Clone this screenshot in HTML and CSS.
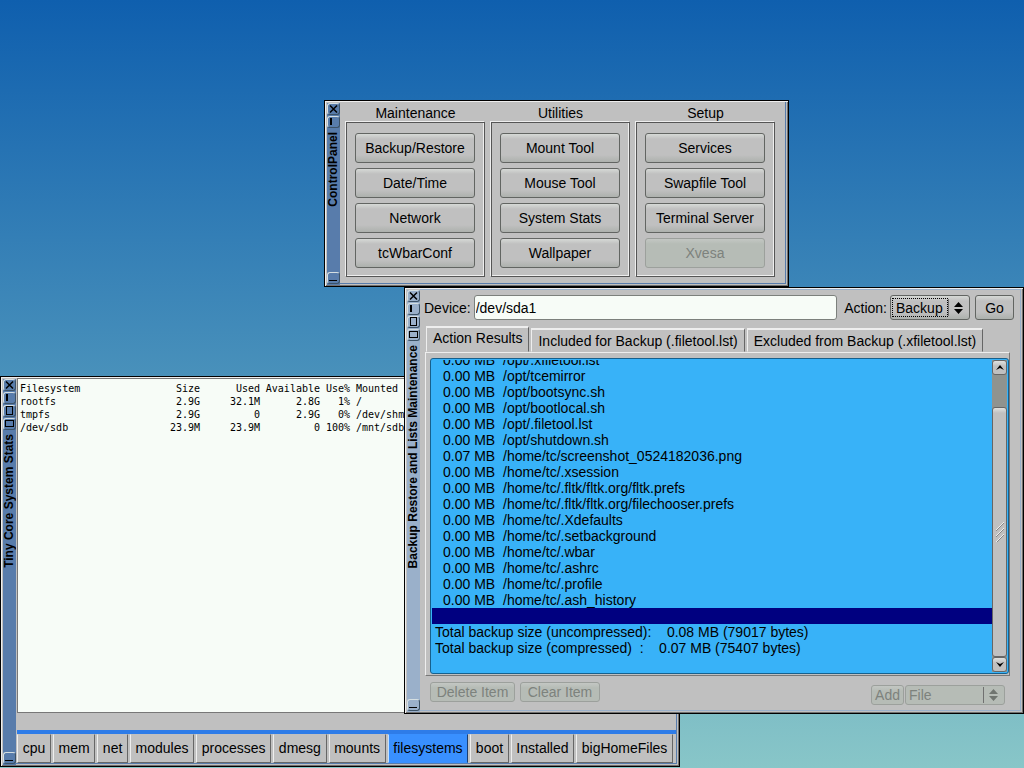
FILE: index.html
```html
<!DOCTYPE html>
<html lang="en">
<head>
<meta charset="utf-8">
<title>Tiny Core Desktop</title>
<link rel="stylesheet" href="styles.css">
</head>
<body>
<main class="desktop">

  <section class="window window-stats" aria-label="Tiny Core System Stats">
    <div class="titlebar">
      <button class="wm-btn" aria-label="Close"><svg viewBox="0 0 11 10"><path class="cross" d="M2 1.500l7 7M9 1.500l-7 7"/></svg></button>
      <button class="wm-btn" aria-label="Shade"><svg viewBox="0 0 11 10"><path d="M3 1v7"/></svg></button>
      <button class="wm-btn" aria-label="Maximize height"><svg viewBox="0 0 11 10"><rect class="thin" x="2.500" y=".5" width="6" height="8"/></svg></button>
      <button class="wm-btn" aria-label="Maximize width"><svg viewBox="0 0 11 10"><rect class="thin" x="1.500" y="1.500" width="8" height="6"/></svg></button>
      <h2 class="title">Tiny Core System Stats</h2>
      <button class="wm-btn wm-last" aria-label="Iconify"><svg viewBox="0 0 11 10"><path class="thin" d="M1 7.500h8"/></svg></button>
    </div>
    <div class="client stats">
      <div class="output">
        <table class="df">
          <tr><th class="c-fs">Filesystem</th><th class="c-num">Size</th><th class="c-num">Used</th><th class="c-num">Available</th><th class="c-use">Use%</th><th class="c-mnt">Mounted on</th></tr>
          <tr><td>rootfs</td><td class="c-num">2.9G</td><td class="c-num">32.1M</td><td class="c-num">2.8G</td><td class="c-use">1%</td><td class="c-mnt">/</td></tr>
          <tr><td>tmpfs</td><td class="c-num">2.9G</td><td class="c-num">0</td><td class="c-num">2.9G</td><td class="c-use">0%</td><td class="c-mnt">/dev/shm</td></tr>
          <tr><td>/dev/sdb</td><td class="c-num">23.9M</td><td class="c-num">23.9M</td><td class="c-num">0</td><td class="c-use">100%</td><td class="c-mnt">/mnt/sdb</td></tr>
        </table>
      </div>
      <div class="stats-strip"></div>
      <nav class="stats-tabs">
        <button>cpu</button><button>mem</button><button>net</button><button>modules</button><button>processes</button><button>dmesg</button><button>mounts</button><button class="active">filesystems</button><button>boot</button><button>Installed</button><button>bigHomeFiles</button>
      </nav>
    </div>
  </section>

  <section class="window window-control" aria-label="ControlPanel">
    <div class="titlebar">
      <button class="wm-btn" aria-label="Close"><svg viewBox="0 0 11 10"><path class="cross" d="M2 1.500l7 7M9 1.500l-7 7"/></svg></button>
      <button class="wm-btn" aria-label="Shade"><svg viewBox="0 0 11 10"><path d="M3 1v7"/></svg></button>
      <h2 class="title">ControlPanel</h2>
      <button class="wm-btn wm-last" aria-label="Iconify"><svg viewBox="0 0 11 10"><path class="thin" d="M1 7.500h8"/></svg></button>
    </div>
    <div class="client control">
      <div class="group">
        <h3>Maintenance</h3>
        <div class="group-box"><button class="btn">Backup/Restore</button><button class="btn">Date/Time</button><button class="btn">Network</button><button class="btn">tcWbarConf</button></div>
      </div>
      <div class="group">
        <h3>Utilities</h3>
        <div class="group-box"><button class="btn">Mount Tool</button><button class="btn">Mouse Tool</button><button class="btn">System Stats</button><button class="btn">Wallpaper</button></div>
      </div>
      <div class="group">
        <h3>Setup</h3>
        <div class="group-box"><button class="btn">Services</button><button class="btn">Swapfile Tool</button><button class="btn">Terminal Server</button><button class="btn" disabled>Xvesa</button></div>
      </div>
    </div>
  </section>

  <section class="window window-backup" aria-label="Backup Restore and Lists Maintenance">
    <div class="titlebar">
      <button class="wm-btn" aria-label="Close"><svg viewBox="0 0 11 10"><path class="cross" d="M2 1.500l7 7M9 1.500l-7 7"/></svg></button>
      <button class="wm-btn" aria-label="Shade"><svg viewBox="0 0 11 10"><path d="M3 1v7"/></svg></button>
      <button class="wm-btn" aria-label="Maximize height"><svg viewBox="0 0 11 10"><rect class="thin" x="2.500" y=".5" width="6" height="8"/></svg></button>
      <button class="wm-btn" aria-label="Maximize width"><svg viewBox="0 0 11 10"><rect class="thin" x="1.500" y="1.500" width="8" height="6"/></svg></button>
      <h2 class="title">Backup Restore and Lists Maintenance</h2>
      <button class="wm-btn wm-last" aria-label="Iconify"><svg viewBox="0 0 11 10"><path class="thin" d="M1 7.500h8"/></svg></button>
    </div>
    <div class="client backup">
      <div class="device-row">
        <label for="device">Device:</label>
        <input id="device" class="field" type="text" value="/dev/sda1">
        <label for="action" class="action-label">Action:</label>
        <span class="choice choice-action">
          <select id="action"><option>Backup</option><option>Restore</option></select>
          <svg class="arrows" viewBox="0 0 9 12"><path d="M0 5L4.500 0L9 5zM0 7h9L4.500 12z"/></svg>
        </span>
        <button class="btn btn-go">Go</button>
      </div>
      <div class="tabs" role="tablist">
        <button class="tab active" role="tab">Action Results</button>
        <button class="tab" role="tab">Included for Backup (.filetool.lst)</button>
        <button class="tab" role="tab">Excluded from Backup (.xfiletool.lst)</button>
      </div>
      <div class="panel">
        <div class="browser">
          <ul class="results">
            <li><span>0.00 MB</span>/opt/.xfiletool.lst</li>
            <li><span>0.00 MB</span>/opt/tcemirror</li>
            <li><span>0.00 MB</span>/opt/bootsync.sh</li>
            <li><span>0.00 MB</span>/opt/bootlocal.sh</li>
            <li><span>0.00 MB</span>/opt/.filetool.lst</li>
            <li><span>0.00 MB</span>/opt/shutdown.sh</li>
            <li><span>0.07 MB</span>/home/tc/screenshot_0524182036.png</li>
            <li><span>0.00 MB</span>/home/tc/.xsession</li>
            <li><span>0.00 MB</span>/home/tc/.fltk/fltk.org/fltk.prefs</li>
            <li><span>0.00 MB</span>/home/tc/.fltk/fltk.org/filechooser.prefs</li>
            <li><span>0.00 MB</span>/home/tc/.Xdefaults</li>
            <li><span>0.00 MB</span>/home/tc/.setbackground</li>
            <li><span>0.00 MB</span>/home/tc/.wbar</li>
            <li><span>0.00 MB</span>/home/tc/.ashrc</li>
            <li><span>0.00 MB</span>/home/tc/.profile</li>
            <li><span>0.00 MB</span>/home/tc/.ash_history</li>
            <li class="selected"></li>
            <li class="total">Total backup size (uncompressed): &nbsp;&nbsp; 0.08 MB (79017 bytes)</li>
            <li class="total">Total backup size (compressed) &nbsp;: &nbsp;&nbsp; 0.07 MB (75407 bytes)</li>
          </ul>
          <div class="scrollbar">
            <button class="sb-btn" aria-label="Scroll up"><svg viewBox="0 0 8 5"><path d="M0 5L4 0L8 5L4 3z"/></svg></button>
            <div class="sb-track">
              <div class="sb-thumb"><svg viewBox="0 0 10 20"><path class="hi" d="M1 8L9 0M1 14L9 6M1 20L9 12"/><path class="lo" d="M1 9L9 1M1 15L9 7M2 20L9 13"/></svg></div>
            </div>
            <button class="sb-btn" aria-label="Scroll down"><svg viewBox="0 0 8 5"><path d="M0 0L4 5L8 0L4 2z"/></svg></button>
          </div>
        </div>
      </div>
      <div class="footer">
        <div class="footer-left">
          <button class="btn btn-delete" disabled>Delete Item</button>
          <button class="btn btn-clear" disabled>Clear Item</button>
        </div>
        <div class="footer-right">
          <button class="btn" disabled>Add</button>
          <span class="choice choice-file disabled">
            <select aria-label="Item type" disabled><option>File</option></select>
            <svg class="arrows" viewBox="0 0 9 12"><path d="M0 5L4.500 0L9 5zM0 7h9L4.500 12z"/></svg>
          </span>
        </div>
      </div>
    </div>
  </section>

</main>
</body>
</html>
```

FILE: styles.css
```css
* { box-sizing: border-box; }

body {
  margin: 0;
  font: 14px/16px "Liberation Sans", Arial, sans-serif;
  color: #000;
}

button, input, select { font: inherit; color: inherit; margin: 0; }
h2, h3, ul { margin: 0; padding: 0; font: inherit; }

.desktop {
  position: relative;
  min-height: 100vh;
  overflow: hidden;
  background: linear-gradient(#0f5fae, #4a92bb 50%, #88c6c8);
}

/* Window frames */
.window {
  position: absolute;
  display: flex;
  padding: 1px;
  background: #c0c0c0;
  border: 1px solid #000;
  box-shadow: inset 1px 1px #eee, inset -1px -1px #707070;
  --bar: #587cab;
}
.window-stats { left: 0; right: 344px; top: 376px; bottom: 1px; }
.window-control { left: 324px; top: 100px; }
.window-backup { left: 404px; right: 0; top: 287px; bottom: 54px; --bar: #9ab0ca; }

.titlebar {
  display: flex;
  flex-direction: column;
  align-items: center;
  flex: none;
  gap: 1px;
  width: 13px;
  margin: 1px 0 0 1px;
  padding-bottom: 1px;
  background: var(--bar);
}
.wm-btn {
  flex: none;
  width: 13px;
  height: 12px;
  padding: 0;
  border: 1px solid;
  border-color: #d5dfe2 #3c5266 #3c5266 #d5dfe2;
  border-radius: 3px;
  background: var(--bar);
}
.wm-btn svg { display: block; width: 11px; height: 10px; fill: none; stroke: #000; stroke-width: 2; }
.wm-btn .thin { stroke-width: 1; }
.wm-btn .cross { stroke-width: 1.5; }
.wm-last { margin-top: auto; }
.title {
  writing-mode: vertical-rl;
  transform: rotate(180deg);
  font: bold 12px/13px "Liberation Sans", Arial, sans-serif;
  white-space: nowrap;
  margin-top: 3px;
}

.client {
  flex: 1;
  min-width: 0;
  border: solid var(--bar);
  border-width: 0 1px 1px 0;
  margin-right: 1px;
  margin-bottom: 1px;
}

/* Buttons */
.btn {
  padding: 0 5px;
  border: 1px solid #626562;
  border-radius: 3px;
  background: linear-gradient(#d6d9d6, #c0c0c0 5px, #c0c0c0 calc(100% - 7px), #adb1ad);
  white-space: nowrap;
}
.btn:disabled {
  color: #7d827d;
  border-color: #9ca09c;
  background: linear-gradient(#c3c7c3, #b6bcb6 5px, #b6bcb6);
}

/* System stats */
.stats { display: flex; flex-direction: column; padding-left: 1px; }
.output {
  flex: 1;
  overflow: hidden;
  padding: 3px 2px;
  background: #f7fcf7;
  border: 1px solid #777;
  border-right-color: #eee;
}
.df {
  table-layout: fixed;
  border-collapse: collapse;
  font: 10px/13px "DejaVu Sans Mono", monospace;
  white-space: pre;
}
.df th, .df td { padding: 0; font-weight: normal; text-align: left; }
.df .c-fs { width: 120px; }
.df .c-num { width: 60px; text-align: right; }
.df .c-use { width: 30px; text-align: right; }
.df .c-mnt { width: 90px; padding-left: 6px; }
.stats-strip {
  height: 21px;
  border-bottom: 4px solid #2e7ce8;
}
.stats-tabs { display: flex; gap: 2px; padding: 0 3px 0 0; }
.stats-tabs button {
  flex: 1 1 auto;
  height: 29px;
  padding: 0 0 2px;
  border: 1px solid;
  border-color: #c0c0c0 #666 #666 #eee;
  background: #c0c0c0;
}
.stats-tabs .active { background: #3990ff; border-color: #3990ff #1c3f70 #3990ff #c0e0ff; }

/* Control panel */
.control { display: flex; gap: 6px; padding: 2px 10px 6px 6px; background: #c0c0c0; }
.group { text-align: center; }
.group h3 { line-height: 18px; }
.group-box {
  display: flex;
  flex-direction: column;
  gap: 5px;
  padding: 10px 9px 8px 8px;
  border: 1px solid #555;
  box-shadow: -1px -1px #eee, inset -1px -1px #eee;
}
.group-box .btn { width: 120px; height: 30px; padding: 0; }

/* Backup window */
.backup {
  display: flex;
  flex-direction: column;
  padding: 5px 6px 5px 4px;
  border-top-width: 1px;
}
.device-row { display: flex; align-items: center; gap: 3px; height: 25px; }
.field {
  flex: 1;
  min-width: 0;
  height: 25px;
  padding: 0 1px;
  border: 1px solid #7c807c;
  border-radius: 3px;
  background: #f7fcf7;
  outline: 0;
}
.action-label { margin-left: 4px; }
.choice {
  position: relative;
  display: block;
  border: 1px solid #626562;
  border-radius: 3px;
  background: linear-gradient(#d6d9d6, #c0c0c0 5px, #c0c0c0 calc(100% - 7px), #adb1ad);
}
.choice select {
  appearance: none;
  display: block;
  padding: 0 3px;
  border: 0;
  outline: 1px dotted #000;
  background: transparent;
  opacity: 1;
}
.choice-action { width: 80px; height: 25px; padding: 3px 2px; }
.choice-action select { width: 54px; height: 17px; }
.choice::after {
  content: "";
  position: absolute;
  right: 20px;
  top: 3px;
  bottom: 3px;
  border-left: 1px solid #707070;
}
.choice .arrows { position: absolute; right: 6px; top: 6px; width: 9px; height: 12px; }
.choice.disabled {
  color: #7d827d;
  border-color: #9ca09c;
  background: #b6bcb6;
}
.choice.disabled::after { top: 1px; bottom: 1px; }
.choice.disabled select { outline: 0; height: 18px; width: 78px; }
.choice.disabled .arrows { top: 3px; fill: #707570; }
.btn-go { width: 39px; height: 25px; margin-left: 2px; }

.tabs { display: flex; align-items: flex-end; gap: 2px; height: 32px; margin-left: 2px; }
.tab {
  height: 24px;
  padding: 0 6px;
  border: 1px solid;
  border-color: #eee #666 transparent #eee;
  border-top-width: 2px;
  background: #c0c0c0;
  white-space: nowrap;
}
.tab.active { height: 26px; padding-bottom: 3px; }

.panel {
  flex: 1;
  min-height: 0;
  display: flex;
  margin: 0 4px 0 1px;
  padding: 5px 0 1px 4px;
  border: 1px solid;
  border-color: #eee #777 #777 #eee;
}
.browser {
  flex: 1;
  display: flex;
  min-width: 0;
  padding: 1px;
  border: 1px solid #17608c;
  border-radius: 3px;
  background: #38b2f8;
}
.results {
  flex: 1;
  min-width: 0;
  display: flex;
  flex-direction: column;
  overflow: hidden;
  list-style: none;
  white-space: nowrap;
}
.results li { flex: none; height: 16px; padding-left: 11px; }
.results li:first-child { margin-top: -8px; }
.results span { display: inline-block; width: 60px; }
.results .selected { background: #000080; }
.results .total { padding-left: 3px; }

.scrollbar { display: flex; flex-direction: column; width: 15px; background: #8f938f; }
.sb-btn {
  flex: none;
  display: grid;
  place-items: center;
  height: 15px;
  padding: 0;
  border: 1px solid #666;
  border-radius: 3px;
  background: linear-gradient(#e0e2e0, #c0c0c0 5px);
}
.sb-btn svg { width: 8px; height: 5px; }
.sb-track { flex: 1; display: flex; padding-top: 32px; }
.sb-thumb {
  flex: 1;
  display: grid;
  place-items: center;
  border: 1px solid #666;
  border-radius: 3px;
  background: linear-gradient(#e0e2e0, #c0c0c0 5px);
}
.sb-thumb svg { width: 10px; height: 20px; }
.hi { stroke: #eee; }
.lo { stroke: #888; }

.footer { display: flex; justify-content: space-between; padding: 6px 9px 0 6px; }
.footer-left, .footer-right { display: flex; }
.footer-left { gap: 5px; }
.footer-right { gap: 1px; padding-top: 3px; }
.footer .btn { height: 20px; padding: 0 3px; }
.footer .btn-delete { width: 85px; }
.footer .btn-clear { width: 80px; }
.choice-file { width: 100px; height: 20px; }
```
